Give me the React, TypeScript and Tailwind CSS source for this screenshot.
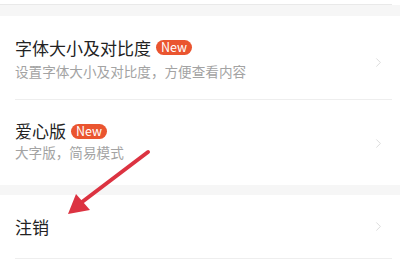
import { ChevronRight } from 'lucide-react';

const font = { fontFamily: '"Noto Sans CJK SC", "Noto Sans", sans-serif' };

function Badge() {
  return (
    <span className="ml-[5px] inline-flex h-[15px] items-center rounded-full bg-[#ea5530] px-[5px] text-[12.5px] leading-none text-white">
      New
    </span>
  );
}

function Chevron() {
  return <ChevronRight className="h-[15px] w-[15px] text-[#cccccc]" strokeWidth={1.1} />;
}

export default function App() {
  return (
    <div className="relative h-[260px] w-[400px] overflow-hidden bg-white" style={font}>
      {/* top gap */}
      <div className="h-[4px] bg-white" />
      <div className="h-[1px] w-[392px] bg-[#e9e9e9]" />
      <div className="h-[11px] bg-[#f6f6f6]" />

      {/* font size row */}
      <div className="flex h-[83px] items-center justify-between pl-[15px] pr-[14px]">
        <div className="mt-[1px] flex flex-col">
          <div className="flex items-center text-[17px] leading-[22px] text-[#222]">
            字体大小及对比度
            <Badge />
          </div>
          <div className="mt-[3px] text-[13.6px] leading-[18px] text-[#a3a3a3]">
            设置字体大小及对比度，方便查看内容
          </div>
        </div>
        <div className="mt-[10px]">
          <Chevron />
        </div>
      </div>
      <div className="ml-[15px] mr-[8px] h-[1px] bg-[#eeeeee]" />

      {/* love edition row */}
      <div className="flex h-[85px] items-center justify-between pl-[15px] pr-[14px]">
        <div className="mt-[-4px] flex flex-col">
          <div className="flex items-center text-[17px] leading-[22px] text-[#222]">
            爱心版
            <Badge />
          </div>
          <div className="mt-[1px] text-[13.6px] leading-[18px] text-[#a3a3a3]">
            大字版，简易模式
          </div>
        </div>
        <div className="mt-[1px]">
          <Chevron />
        </div>
      </div>
      <div className="h-[10px] bg-[#f6f6f6]" />

      {/* logout row */}
      <div className="flex h-[63px] items-center justify-between pl-[15px] pr-[14px]">
        <div className="text-[17px] leading-[22px] text-[#222]">注销</div>
        <Chevron />
      </div>
      <div className="ml-[15px] mr-[8px] h-[1px] bg-[#eeeeee]" />

      {/* red annotation arrow */}
      <svg className="pointer-events-none absolute left-0 top-0" width="400" height="260" viewBox="0 0 400 260">
        <line x1="148" y1="152" x2="82" y2="202" stroke="#dc3341" strokeWidth="4" strokeLinecap="round" />
        <polygon points="68,214 76,194 90,210" fill="#dc3341" />
      </svg>
    </div>
  );
}
